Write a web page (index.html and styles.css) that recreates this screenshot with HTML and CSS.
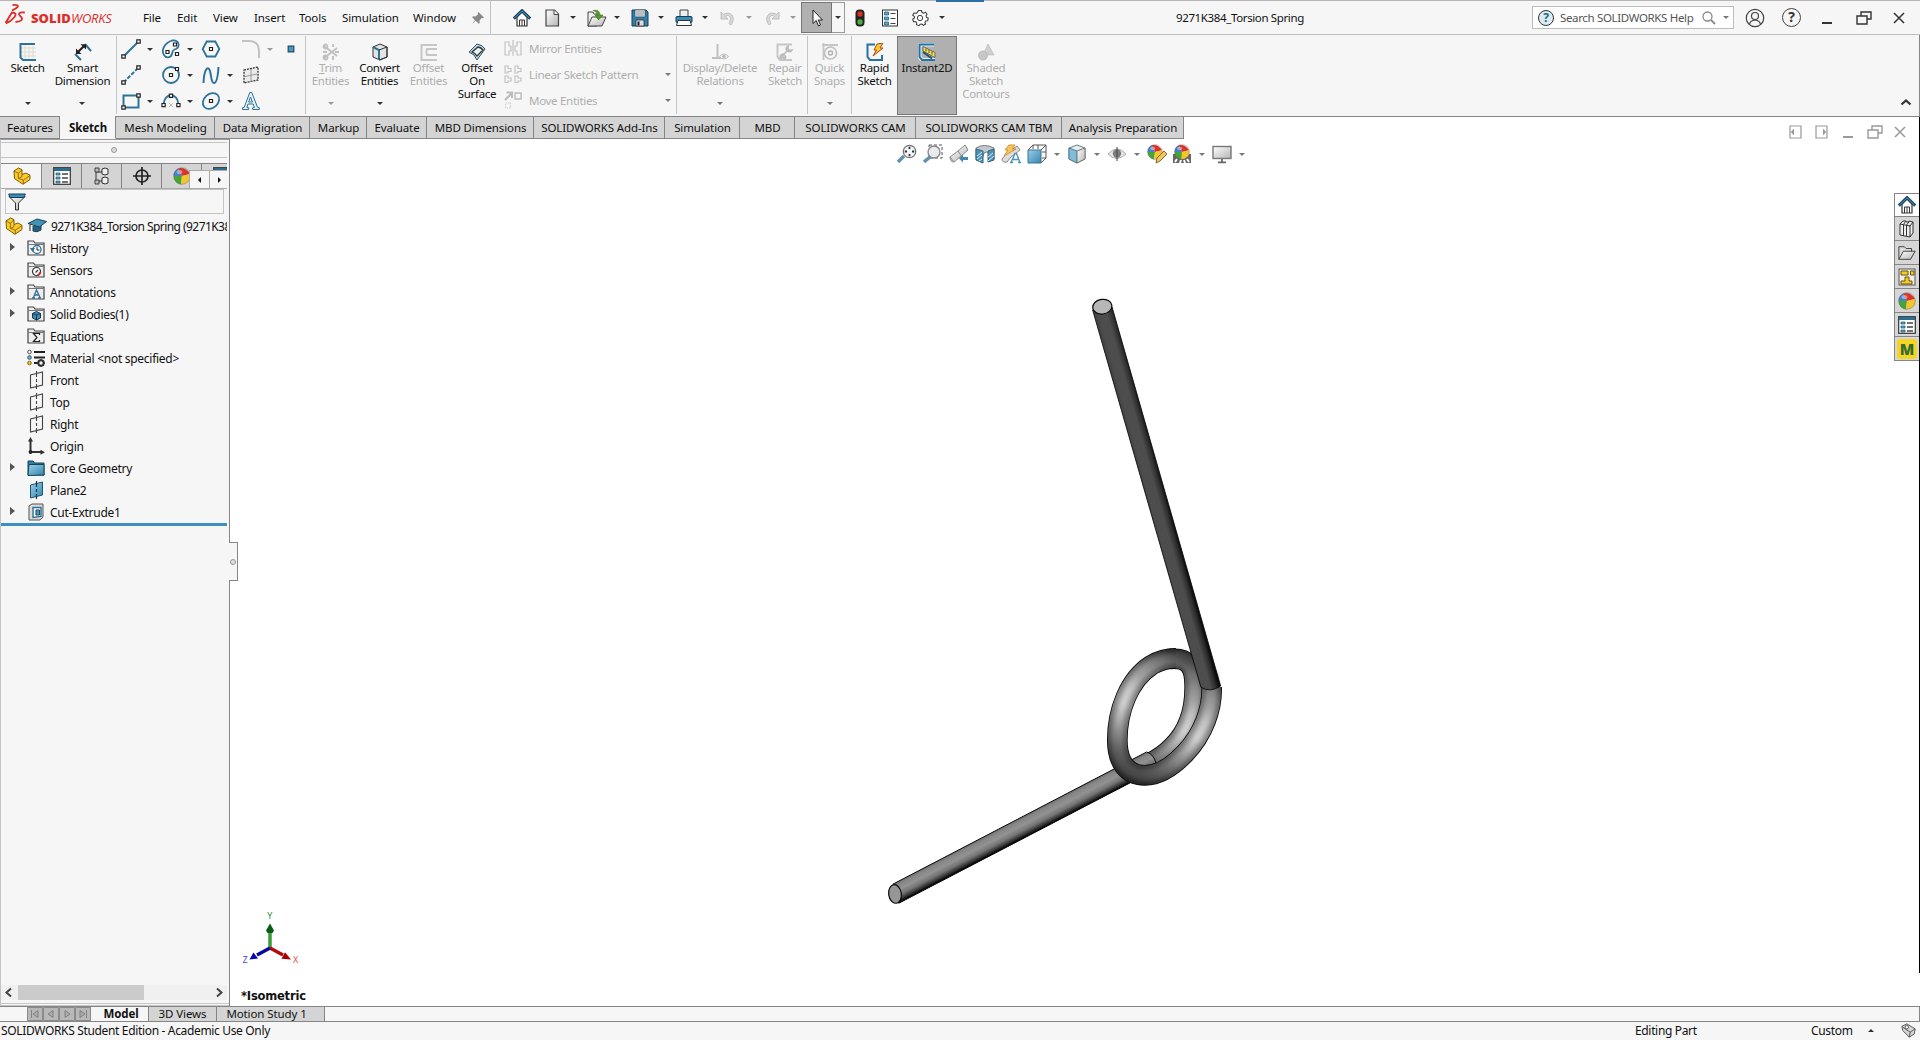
FILE: index.html
```html
<!DOCTYPE html>
<html lang="en">
<head>
<meta charset="utf-8">
<title>9271K384_Torsion Spring</title>
<link rel="stylesheet" href="styles.css">
</head>
<body>
<svg class="sprite" aria-hidden="true">
  <defs>
    <linearGradient id="blueFill" x1="0" y1="0" x2="1" y2="1"><stop offset="0" stop-color="#9bd0ea"/><stop offset="1" stop-color="#3585ad"/></linearGradient>
    <linearGradient id="greyFill" x1="0" y1="0" x2="1" y2="1"><stop offset="0" stop-color="#fff"/><stop offset="1" stop-color="#b5b5b5"/></linearGradient>
  </defs>
  <symbol id="home" viewBox="0 0 18 18"><path d="M4 8v9h10V8L9 3z" fill="#fff" stroke="#333" stroke-width="1.2"/><path d="M6.5 17v-6h5v6M9 11v6" fill="none" stroke="#333"/><path d="M.8 9.6 9 1.7l8.200 7.900" fill="none" stroke="#17425c" stroke-width="3"/><path d="M1.500 9 9 1.900 16.500 9" fill="none" stroke="#4d9fc4" stroke-width="1"/></symbol>
  <symbol id="new" viewBox="0 0 18 18"><path d="M3 1h8.500L15.500 5v12H3z" fill="url(#greyFill)" stroke="#444" stroke-width="1.200"/><path d="M11 1v4.500h4.500" fill="#fff" stroke="#444"/></symbol>
  <symbol id="open" viewBox="0 0 20 18"><path d="M1 17V3h5l1 2h3v12z" fill="#eee" stroke="#444"/><path d="M1 17 5 8h14l-4 9z" fill="url(#greyFill)" stroke="#444"/><path d="M6 1.500c4-1 7 .5 7 4.500h3l-4.500 5L8 6h2.500C10.500 4 9 2.500 6 1.500z" fill="#4e9a1f" stroke="#376d15" stroke-width=".5"/></symbol>
  <symbol id="save" viewBox="0 0 18 18"><path d="M1 1h14l2 2v14H1z" fill="#347fa7" stroke="#163e57"/><path d="M4 1h10v7H4z" fill="#f5f5f5" stroke="#163e57" stroke-width=".6"/><path d="M5 3h8M5 5h8M5 7h8" stroke="#888"/><path d="M5 11h8v6H5z" fill="#ddd" stroke="#222" stroke-width=".7"/><path d="M6.500 12.500h2v4h-2z" fill="#222"/></symbol>
  <symbol id="print" viewBox="0 0 18 18"><path d="M5 8V1h8v7" fill="#eee" stroke="#444"/><rect x="1" y="7.500" width="16" height="6" rx="1" fill="#3d8bb3" stroke="#153c54"/><path d="M3 11.500h12L16.500 16.500h-15z" fill="#fff" stroke="#333"/></symbol>
  <symbol id="undo" viewBox="0 0 18 18"><path d="M2 3v7h7L6.500 7.500c3-2.500 7 0 3.500 7l2 1.500C18 8 11 1 4.500 5.500z" fill="#d9d9d9" stroke="#b5b5b5" stroke-width=".8"/></symbol>
  <symbol id="pointer" viewBox="0 0 18 18"><path d="M5 1v13.500l3.200-3 2.300 5.500 2-1-2.300-5h4.300z" fill="#fff" stroke="#222"/></symbol>
  <symbol id="traffic" viewBox="0 0 12 18"><rect x="1.500" y=".5" width="9" height="17" rx="4" fill="#222"/><circle cx="6" cy="5" r="2.700" fill="#d93025"/><circle cx="6" cy="13" r="2.700" fill="#4caf3d"/></symbol>
  <symbol id="props" viewBox="0 0 18 18"><rect x="1.500" y="1" width="15" height="16" fill="#fff" stroke="#333"/><path d="M3.500 3h4v3h-4zM3.500 8h4v3h-4zM3.500 13h4v3h-4z" fill="#58a9cf" stroke="#1b4d69" stroke-width=".7"/><path d="M9.500 4.500h5M9.500 9.500h5M9.500 14.500h5" stroke="#444"/></symbol>
  <symbol id="list" viewBox="0 0 18 18"><rect x=".7" y=".7" width="16.600" height="16.600" fill="#fff" stroke="#333" stroke-width="1.200"/><path d="M1 1h16v3H1z" fill="#2c6c8f"/><path d="M3 6h4v2H3zM3 10h4v2H3zM3 14h4v2H3z" fill="#58a9cf" stroke="#1b4d69" stroke-width=".7"/><path d="M9 7h6M9 11h6M9 15h6" stroke="#444" stroke-width="1.300"/></symbol>
  <symbol id="gear" viewBox="0 0 18 18"><path d="m7.500 1.500 3 0 .5 2 1.500.7 2-1 1.500 2-1 1.700.5 1.400 1.700.7-.5 2.700-2 .3-.8 1.300.7 1.700-2.200 1.300-1.500-1.300-1.700.2-1.200 1.500-2.500-1 .2-2-1.200-1.200-2 .2-.8-2.500 1.700-1.200v-1.500L1.700 6.200 3 4l2 .4 1.400-1z" fill="#fff" stroke="#444" stroke-width="1.100"/><circle cx="9" cy="9" r="2.700" fill="#f6f6f6" stroke="#444"/></symbol>
  <symbol id="pin" viewBox="0 0 14 14"><path d="M7.500 1 13 6.500l-1.300.8-1-.3L8.500 9.500l.2 2.500-1 .8-3-3L1 13l3-3.800-2.800-2.900.8-1 2.500.2L7.100 3.200l-.4-1z" fill="#888"/></symbol>
  <symbol id="sketch" viewBox="0 0 18 18"><path d="M6 1v16M10 3v14M14 3v12M2 5h15M2 9h15M2 13h15" stroke="#dfdccb"/><path d="M16 1H1.500v13.500L4 17h13" fill="none" stroke="#2d7298" stroke-width="2"/></symbol>
  <symbol id="dimension" viewBox="0 0 18 18"><path d="m1 11 6 6M11 1l6 7" stroke="#2d7298" stroke-width="2"/><path d="m3.500 9.500 7-7" stroke="#222" stroke-width="2.200"/><path d="M2 5.500V11h5.500zM6.500 1.300H12v5.200z" fill="#222"/></symbol>
  <symbol id="line" viewBox="0 0 20 20"><path d="M2.500 17.500 17.500 2.500" stroke="#2d7298" stroke-width="2"/><path d="M.8 15.800h3.400v3.400H.8zM15.800.8h3.400v3.400h-3.400z" fill="#fff" stroke="#222" stroke-width="1.200"/></symbol>
  <symbol id="cline" viewBox="0 0 20 20"><path d="M2.500 17.500 17.500 2.500" stroke="#2d7298" stroke-width="2" stroke-dasharray="4 1.500"/><path d="M.8 15.800h3.400v3.400H.8zM15.800.8h3.400v3.400h-3.400z" fill="#fff" stroke="#222" stroke-width="1.200"/></symbol>
  <symbol id="rect" viewBox="0 0 20 20"><path d="M2.500 4.500h15v12h-15z" fill="none" stroke="#2d7298" stroke-width="2"/><path d="M.8 14.800h3.400v3.400H.8zM15.800 2.800h3.400v3.400h-3.400z" fill="#fff" stroke="#222" stroke-width="1.200"/></symbol>
  <symbol id="slot" viewBox="0 0 20 20"><path d="M3 16C0 12 3 4 11 1.500c7-1 8.500 6 4 8.500-4 1-3 2-4 5-1 4-6 4.500-8 1z" fill="none" stroke="#2d7298" stroke-width="1.800"/><path d="M12.500 4h3v3h-3zM5 11.500h3v3H5zM14.500 13.500h3v3h-3z" fill="#fff" stroke="#222" stroke-width="1.200"/></symbol>
  <symbol id="circle" viewBox="0 0 20 20"><circle cx="10" cy="10" r="8" fill="none" stroke="#2d7298" stroke-width="1.800"/><path d="M8.500 8.500h3v3h-3zM14.500 2.500h3v3h-3z" fill="#fff" stroke="#222" stroke-width="1.200"/></symbol>
  <symbol id="arc" viewBox="0 0 20 20"><path d="M2.500 14C3 1 17 1 17.500 14" fill="none" stroke="#2d7298" stroke-width="1.800"/><path d="m8 12 4 4m0-4-4 4" stroke="#bbb"/><path d="M1 12.500h3.200v3.200H1zM15.800 12.500H19v3.200h-3.200zM8.400 3.200h3.200v3.200H8.400z" fill="#fff" stroke="#222" stroke-width="1.200"/></symbol>
  <symbol id="polygon" viewBox="0 0 20 20"><path d="M5.700 2.500h8.600l4 7.500-4 7.500H5.700L1.700 10z" fill="none" stroke="#2d7298" stroke-width="1.800"/><path d="M8.500 8.500h3v3h-3z" fill="#fff" stroke="#222" stroke-width="1.200"/></symbol>
  <symbol id="spline" viewBox="0 0 20 20"><path d="M2.500 18C3 4 7 0 9 6c1.500 5 1 12 4 12s4-8 4.500-16" fill="none" stroke="#2d7298" stroke-width="2"/></symbol>
  <symbol id="ellipse" viewBox="0 0 20 20"><ellipse cx="10" cy="10" rx="9" ry="7" transform="rotate(-42 10 10)" fill="none" stroke="#2d7298" stroke-width="1.800"/><path d="M8.500 8.500h3v3h-3z" fill="#fff" stroke="#222" stroke-width="1.200"/></symbol>
  <symbol id="fillet" viewBox="0 0 20 20"><path d="M1 2h7q10 0 10 10v7" fill="none" stroke="#c2c2c2" stroke-width="2"/></symbol>
  <symbol id="splane" viewBox="0 0 20 20"><path d="m3 5 14-3v13L3 18z" fill="#ececec" stroke="#333" stroke-width="1.300" stroke-dasharray="2 1"/><path d="M10 4v13M4 11.500 16 9" fill="none" stroke="#999"/></symbol>
  <symbol id="textA" viewBox="0 0 20 20"><path d="M1.500 18.500v-1.800l1.700-.4L8.800 1.500h2l5.700 14.800 1.800.4v1.800h-6.600v-1.800l1.700-.4-1.200-3.300H7l-1.200 3.300 1.900.4v1.800zM7.700 11h3.700L9.500 6z" fill="#e6f1f7" stroke="#2d7298"/></symbol>
  <symbol id="point" viewBox="0 0 20 20"><path d="M7.200 7.200h5.600v5.600H7.200z" fill="#459bc6" stroke="#1d4a63" stroke-width="1.200"/></symbol>
  <symbol id="trim" viewBox="0 0 18 18"><g fill="none" stroke="#c0c0c0" stroke-width="1.800"><path d="m2 3 13 10M2 15 15 5M11 1v3M11 13v4M1 9h4M13 9h4"/><circle cx="3.500" cy="3.500" r="2"/><circle cx="3.500" cy="14.500" r="2"/></g></symbol>
  <symbol id="convert" viewBox="0 0 18 18"><path d="m2 4 7-3 7 3v10l-7 3-7-3z" fill="#e4e4e4" stroke="#333"/><path d="m2 4 6 3v10" fill="none" stroke="#2d7298" stroke-width="2"/><path d="m8 7 8-3M16 4v10l-8 3" fill="none" stroke="#333"/></symbol>
  <symbol id="offset" viewBox="0 0 18 18"><path d="M17 2H1.500v15H17M17 6H7q-1.500 3 0 6h10" fill="none" stroke="#c6c6c6" stroke-width="2"/></symbol>
  <symbol id="surface" viewBox="0 0 18 18"><path d="M1 9 9 1q6 1 8 5L9 17Q7 11 1 9z" fill="#b9d6e3" stroke="#35566a"/><path d="m4 9 6-5q3 .5 5 3l-6 6Q7 10 4 9z" fill="#e8f0f4" stroke="#333" stroke-width="1.300"/></symbol>
  <symbol id="mirror" viewBox="0 0 18 18"><path d="M1 3h4v4h2v5H5v4H1zM17 3h-4v4h-2v5h2v4h4zM9 1v16" fill="none" stroke="#c3c3c3" stroke-width="1.200"/></symbol>
  <symbol id="pattern" viewBox="0 0 18 18"><path d="M1 1h3v2.500h3v3H4V8H1zM11 1h3v2.500h3v3h-3V8h-3zM1 11h3v2h3v3H4v1.500H1zM11 11h3v2h3v3h-3v1.500h-3z" fill="none" stroke="#c3c3c3" stroke-width="1.200"/></symbol>
  <symbol id="move" viewBox="0 0 18 18"><path d="m1 9 6-6M2.500 1.500H8v5.500" fill="none" stroke="#bbb" stroke-width="2"/><path d="M11 2h6v6h-6z" fill="none" stroke="#bbb" stroke-width="1.400"/><path d="M1.500 12h5v5h-5z" fill="none" stroke="#ccc" stroke-dasharray="1.500 1"/></symbol>
  <symbol id="relations" viewBox="0 0 18 18"><path d="M6.500 1v14M1 15h9" stroke="#c0c0c0" stroke-width="2"/><path d="M8.500 13.500q4.500-5 9 0-4.500 5-9 0z" fill="#f5f5f5" stroke="#bbb"/><circle cx="13" cy="13.500" r="1.800" fill="#bbb"/></symbol>
  <symbol id="repair" viewBox="0 0 18 18"><path d="M16 1.500H1.500V14L4 17h12" fill="none" stroke="#c6c6c6" stroke-width="2"/><path d="m6 13 6-6M12 3q-3 2-1 5 3 2 5-1l-2.500.5-1.500-2zM7 11q-4 1-2.500 5l2-2 2 2q3-2-1.500-5z" fill="#ccc" stroke="#bbb" stroke-width="1.500"/></symbol>
  <symbol id="snaps" viewBox="0 0 18 18"><path d="M1 2h16M2.500 0v17" stroke="#c6c6c6" stroke-width="1.800"/><circle cx="9.500" cy="10" r="6" fill="none" stroke="#c0c0c0" stroke-width="1.700"/><circle cx="9.500" cy="10" r="2" fill="none" stroke="#b0b0b0" stroke-width="1.400"/></symbol>
  <symbol id="rapid" viewBox="0 0 18 18"><path d="M9 1.500H1.500V14L4 17h12v-5" fill="none" stroke="#2772a0" stroke-width="2"/><path d="m11 1 6-1-3 5h3L7 13l3.500-6H8z" fill="#f8c83a" stroke="#b14a12"/></symbol>
  <symbol id="instant" viewBox="0 0 18 18"><path d="M16 1.500H1.500V14L4 17h13" fill="none" stroke="#dff2fb" stroke-width="4"/><path d="M16 1.500H1.500V14L4 17h13" fill="none" stroke="#2772a0" stroke-width="2"/><path d="m5 3.500 12 6v5L5 8z" fill="#f6df50" stroke="#555" stroke-width=".8"/><path d="m5 9 9 6.500" stroke="#1f5570" stroke-width="2"/><path d="M8 5.500v3m3-1.500v3m3-1.500v3" stroke="#333" stroke-width=".8"/></symbol>
  <symbol id="contours" viewBox="0 0 18 18"><path d="m11 1 6 11H6z" fill="#cfcfcf" stroke="#bbb" stroke-width=".7"/><circle cx="6" cy="12.500" r="4.600" fill="#c6c6c6" stroke="#b5b5b5" stroke-width=".7"/></symbol>
  <symbol id="part" viewBox="0 0 18 18"><path d="M1 4 5.500 1 9 2.700V7.500L13 6l4 2.300v4.200L10 17.300 1.500 11.500z" fill="#fcca2c" stroke="#7b5b05"/><path d="m1.300 4.200 4 2v5l5 2 6.400-4.500M5.300 6.200 9 3M9 7.500v2l-3.500 2M10.300 13v4" fill="none" stroke="#7b5b05" stroke-width=".8"/></symbol>
  <symbol id="config" viewBox="0 0 18 18"><path d="M3 1v16M3 5h7M3 14h7" stroke="#333" fill="none"/><path d="M2 1h4v4H2zM2 13h4v4H2z" fill="#bbb" stroke="#444"/><path d="m9 2 3-1 3 1v5l-3 1-3-1zM9 11l3-1 3 1v5l-3 1-3-1z" fill="#eee" stroke="#333"/></symbol>
  <symbol id="target" viewBox="0 0 18 18"><circle cx="9" cy="9" r="6" fill="none" stroke="#222" stroke-width="1.700"/><path d="M9 0v18M0 9h18" stroke="#222" stroke-width="1.700"/></symbol>
  <symbol id="ball" viewBox="0 0 18 18"><path d="M9 9 5 1.500A8.500 8.500 0 0 0 .6 9z" fill="#4a7fc9"/><path d="M9 9 5 1.500Q12-.5 17 7z" fill="#d8342b"/><path d="M9 9 .6 9Q1 16 8 17.500z" fill="#46a536"/><path d="M9 9 17 7q2 9-9 10.500z" fill="#f3c52b"/><circle cx="9" cy="9" r="8.300" fill="none" stroke="#555" stroke-opacity=".55" stroke-width=".7"/><ellipse cx="6.500" cy="5" rx="3" ry="2" fill="#fff" opacity=".4"/></symbol>
  <symbol id="funnel" viewBox="0 0 18 18"><path d="M1 3.500 7.500 10v7h3v-7L17 3.500z" fill="url(#greyFill)" stroke="#333"/><path d="M.7 1h16.600l-1.300 3.500H2z" fill="#3b8cb4" stroke="#174159"/></symbol>
  <symbol id="cap" viewBox="0 0 20 18"><path d="M6 9v5q4 2 8-1V8" fill="#24617f" stroke="#1c4257"/><path d="M1 6.500 10 2l9.500 2.500-7 5.500z" fill="#4293b9" stroke="#1c4257"/><path d="M3 7.500V14" stroke="#222"/></symbol>
  <symbol id="folder" viewBox="0 0 18 18"><path d="M1 16V2h5.500L8 4h9v12z" fill="#eee" stroke="#444" stroke-width="1.200"/><path d="M1 5.500h16" stroke="#777"/></symbol>
  <symbol id="bfolder" viewBox="0 0 18 18"><path d="M1 16V2h5l1.500 2H17v12z" fill="#2f7da3" stroke="#17455d"/><path d="M1 16.500 2 5.500h15V16z" fill="url(#blueFill)" stroke="#17455d"/></symbol>
  <symbol id="material" viewBox="0 0 18 18"><path d="M7 3h11M7 8.500h11M7 14h5" stroke="#222" stroke-width="2"/><circle cx="2.500" cy="3" r="1.800" fill="#eee" stroke="#555"/><circle cx="2.500" cy="8.500" r="1.800" fill="#6cb6dc" stroke="#28546c"/><circle cx="2.500" cy="14" r="1.800" fill="#f3c52b" stroke="#86680d"/><circle cx="14" cy="14" r="2.700" fill="none" stroke="#333" stroke-width="2"/><path d="M14 10v1.500m0 5V18M10 14h1.500m5 0H18M11.200 11.200l1 1m3.600 3.600 1 1m0-5.600-1 1m-3.600 3.600-1 1" stroke="#333" stroke-width="1.300"/></symbol>
  <symbol id="plane" viewBox="0 0 18 18"><path d="m3.500 4 12-3v13l-12 3zM9.500 0v6m0 2v3m0 2v5" fill="none" stroke="#444" stroke-width="1.100"/></symbol>
  <symbol id="bplane" viewBox="0 0 18 18"><path d="m3.500 4 12-3v13l-12 3z" fill="url(#blueFill)" stroke="#1d5774"/><path d="M9.500 0v6m0 2v3m0 2v5" stroke="#17384a" stroke-width="1.200"/></symbol>
  <symbol id="origin" viewBox="0 0 18 18"><path d="M3.500 3v12H16" fill="none" stroke="#333" stroke-width="2"/><path d="m3.500 0 2.500 4.500H1zM18 15.200l-4.500 2.500v-5z" fill="#333"/><circle cx="3.500" cy="15" r="1.900" fill="#222"/></symbol>
  <symbol id="cut" viewBox="0 0 18 18"><path d="m2 3 3-2h11v13l-3 3H2z" fill="#dcdcdc" stroke="#555"/><path d="M6 4.500h8v9l-8 1z" fill="#f5f5f5" stroke="#2d7298" stroke-width="1.400"/><path d="M9 7h3.500v5H9z" fill="#4a9cc1" stroke="#1d4a63"/></symbol>
  <symbol id="magfit" viewBox="0 0 20 20"><path d="m1 18 6-6" stroke="#5e92ad" stroke-width="3.400"/><circle cx="12.500" cy="7.500" r="6.200" fill="#f3f6f8" stroke="#777" stroke-width="1.300"/><path d="M12.500 2.800v2.200m0 5v2.200m-4.700-4.700H10m5 0h2.200" stroke="#333" stroke-width="1.800"/></symbol>
  <symbol id="magarea" viewBox="0 0 20 20"><path d="M6 1h13v13H6z" fill="none" stroke="#555" stroke-dasharray="3 2"/><path d="m1 18 6-5" stroke="#5e92ad" stroke-width="3.400"/><circle cx="11" cy="8" r="6" fill="#e8eaeb" stroke="#888" stroke-width="1.300"/></symbol>
  <symbol id="prevview" viewBox="0 0 20 20"><path d="m1 13 8-6 7-6 3 5-7 6-7 6q-4 0-4-5z" fill="url(#greyFill)" stroke="#888"/><path d="m1 13 4 5M9 7l3 4.500" stroke="#888" fill="none"/><path d="m10 14.500 4-4V13h5v3h-5v2.500z" fill="#3f89ae"/></symbol>
  <symbol id="section" viewBox="0 0 20 20"><path d="M1 4q8-5 18 0v11l-4 2V9q-4-2-6 0l-3 9-5-3z" fill="#c3cacd" stroke="#777"/><path d="m1 5 7 2v12l-7-3zM13 7l6-2v11l-6 2z" fill="#4c94b7" stroke="#35657c"/><path d="m2 12 5-4M2 15l5-4m0 4-3 2m9-4 5-4m-5 8 6-5" stroke="#d9edf6"/></symbol>
  <symbol id="dynview" viewBox="0 0 20 20"><path d="m1 15 5-6L16 2l3 4-9 7-4 5q-5 1-5-3z" fill="#ddd" stroke="#888"/><path d="m8 1 6 0-3 4h4L3 12l4-6H4z" fill="#f9c65c" stroke="#d19439"/><path d="m10 18.500 4-9h1.500l3.500 9M12 15.500h5M9 18.500h3m5 0h3" fill="none" stroke="#4c93b6" stroke-width="1.400"/></symbol>
  <symbol id="orient" viewBox="0 0 20 20"><path d="M6 5V1h13v13h-4M1 6l5-5m8 5 5-5M11 1v4m4 3h4M14 19l5-5" fill="none" stroke="#555"/><path d="M1 6h13v13H1z" fill="url(#blueFill)" stroke="#3b7390"/></symbol>
  <symbol id="display" viewBox="0 0 20 20"><path d="m2 4 8-3 8 3v11l-8 4-8-4z" fill="#e4edf1" stroke="#777"/><path d="m2 4 8 3v12l-8-4z" fill="#7fbdd9" stroke="#4d7f96"/><path d="m10 7 8-3v11l-8 4z" fill="url(#greyFill)" stroke="#777"/></symbol>
  <symbol id="eye" viewBox="0 0 20 20"><path d="M1 10q9-10 18 0-9 9-18 0z" fill="#e6e6e6" stroke="#aaa"/><circle cx="10" cy="9.500" r="4.200" fill="#7e7e7e"/><path d="M10 3v14" stroke="#444"/></symbol>
  <symbol id="pencil" viewBox="0 0 20 20"><path d="m9 19 1-5 7-7 3 3-7 7z" fill="#f2c65c" stroke="#806740"/></symbol>
  <symbol id="monitor" viewBox="0 0 20 20"><rect x="1" y="2.500" width="18" height="12" fill="url(#greyFill)" stroke="#777" stroke-width="1.400"/><path d="M10 15v3M6 18.300h8" stroke="#666" stroke-width="1.700"/></symbol>
  <symbol id="user" viewBox="0 0 20 20"><circle cx="10" cy="10" r="8.700" fill="none" stroke="#444" stroke-width="1.200"/><circle cx="10" cy="8" r="3.500" fill="none" stroke="#444" stroke-width="1.200"/><path d="M4.500 16.500q.5-4 5.500-4.500 5 .5 5.500 4.500" fill="none" stroke="#444" stroke-width="1.200"/></symbol>
  <symbol id="books" viewBox="0 0 18 18"><path d="m2 4 3-3h3v1h3V1l4 1v11l-3 4-10-2z" fill="#eee" stroke="#333"/><path d="M5.500 5v11M8.500 5v11M12 5v12M2 4l10 2 3-4M5.500 4.500l2-3M8.500 5l2.500-3" fill="none" stroke="#333"/></symbol>
  <symbol id="gfolder" viewBox="0 0 20 18"><path d="M1 16V2h6l2 2h6v4" fill="#ddd" stroke="#333"/><path d="m1 16 5-9h13l-5 9z" fill="url(#greyFill)" stroke="#333"/></symbol>
  <symbol id="palette" viewBox="0 0 18 18"><rect x="1" y="1" width="16" height="16" fill="#eee" stroke="#555"/><path d="M3 3h7v4H3zM12.500 3H16v4h-3.500zM7 9h4v4h3v3H3v-3h4z" fill="#f5cb2c" stroke="#695509"/></symbol>
  <symbol id="tag" viewBox="0 0 18 18"><path d="m1 4 6-3 10 6-1 6-6 4L2 9z" fill="#d4d4d4" stroke="#444"/><path d="m2 5 9 6 6-4M11 11l-1 6" fill="none" stroke="#444"/><circle cx="7" cy="5" r="2" fill="#fff" stroke="#444"/></symbol>
  <symbol id="restore" viewBox="0 0 16 14"><path d="M5 4.500V1h10v7h-4M1 5h10v8H1z" fill="none" stroke="currentColor" stroke-width="1.400"/></symbol>
  <symbol id="close" viewBox="0 0 12 12"><path d="m1 1 10 10M11 1 1 11" stroke="currentColor" stroke-width="1.500"/></symbol>
</svg>

<div class="app">
  <header class="titlebar">
    <div class="logo">
      <svg width="21" height="22" viewBox="0 0 21 22"><path d="M7.500 1.200q5-.8 5.500.8-.5 2-6 4.500M.5 19 7 8.500q5.500.2 2.500 4.500Q6 17.500.8 19.500M19.800 8.500q-6-.8-5.800 1.700.5 1.500 2.700 3.300 1.500 4-6.200 4.500" fill="none" stroke="#da2f2b" stroke-width="1.800"/></svg>
      <span class="brand"><b>SOLID</b><em>WORKS</em></span>
    </div>
    <nav class="menu"><span>File</span><span>Edit</span><span>View</span><span>Insert</span><span>Tools</span><span>Simulation</span><span>Window</span></nav>
    <div class="pin"><svg width="14" height="14"><use href="#pin"/></svg></div>
    <div class="quick">
      <svg class="q-home" width="18" height="18"><use href="#home"/></svg>
      <svg class="q" width="18" height="18"><use href="#new"/></svg><i class="dd"></i>
      <svg class="q-open" width="20" height="18"><use href="#open"/></svg><i class="dd"></i>
      <svg class="q" width="18" height="18"><use href="#save"/></svg><i class="dd"></i>
      <svg class="q" width="18" height="18"><use href="#print"/></svg><i class="dd"></i>
      <svg class="q" width="18" height="18"><use href="#undo"/></svg><i class="dd dim"></i>
      <svg class="q flip" width="18" height="18"><use href="#undo"/></svg><i class="dd dim"></i>
    </div>
    <div class="select"><span class="select-main"><svg width="18" height="18"><use href="#pointer"/></svg></span><span class="select-dd"><i class="dd"></i></span></div>
    <div class="quick-end"><svg width="12" height="18"><use href="#traffic"/></svg><svg width="18" height="18"><use href="#props"/></svg><svg width="18" height="18"><use href="#gear"/></svg><i class="dd"></i></div>
    <div class="doc-title">9271K384_Torsion Spring</div>
    <div class="search"><span class="q-badge">?</span><span class="search-text">Search SOLIDWORKS Help</span><svg width="14" height="14" viewBox="0 0 14 14"><circle cx="5.500" cy="5.500" r="4.500" fill="none" stroke="#888" stroke-width="1.300"/><path d="m9 9 4 4" stroke="#888" stroke-width="1.800"/></svg><i class="dd grey"></i></div>
    <div class="window-buttons">
      <svg width="20" height="20"><use href="#user"/></svg>
      <span class="help">?</span>
      <span class="min"></span>
      <svg width="16" height="14"><use href="#restore"/></svg>
      <svg width="12" height="12"><use href="#close"/></svg>
    </div>
    <div class="accent"></div>
  </header>

  <section class="ribbon">
    <div class="btn w-sketch"><svg><use href="#sketch"/></svg><span>Sketch</span><i class="dd"></i></div>
    <div class="btn w-smart"><svg><use href="#dimension"/></svg><span>Smart<br>Dimension</span><i class="dd"></i></div>
    <div class="sep"></div>
    <div class="tools">
      <div><svg><use href="#line"/></svg><i class="dd"></i></div><div><svg><use href="#slot"/></svg><i class="dd"></i></div><div><svg><use href="#polygon"/></svg></div><div><svg><use href="#fillet"/></svg><i class="dd dim"></i></div><div><svg><use href="#point"/></svg></div>
      <div><svg><use href="#cline"/></svg></div><div><svg><use href="#circle"/></svg><i class="dd"></i></div><div><svg><use href="#spline"/></svg><i class="dd"></i></div><div><svg><use href="#splane"/></svg></div><div></div>
      <div><svg><use href="#rect"/></svg><i class="dd"></i></div><div><svg><use href="#arc"/></svg><i class="dd"></i></div><div><svg><use href="#ellipse"/></svg><i class="dd"></i></div><div><svg><use href="#textA"/></svg></div><div></div>
    </div>
    <div class="sep"></div>
    <div class="btn off w-49"><svg><use href="#trim"/></svg><span><u>T</u>rim<br>Entities</span><i class="dd dim"></i></div>
    <div class="btn w-49"><svg><use href="#convert"/></svg><span>Convert<br>Entities</span><i class="dd"></i></div>
    <div class="btn off w-49"><svg><use href="#offset"/></svg><span>Offset<br>Entities</span></div>
    <div class="btn w-48"><svg><use href="#surface"/></svg><span>Offset<br>On<br>Surface</span></div>
    <div class="rows">
      <div><svg><use href="#mirror"/></svg><span>Mirror Entities</span></div>
      <div><svg><use href="#pattern"/></svg><span>Linear Sketch Pattern</span><i class="dd grey"></i></div>
      <div><svg><use href="#move"/></svg><span>Move Entities</span><i class="dd grey"></i></div>
    </div>
    <div class="sep"></div>
    <div class="btn off w-86"><svg><use href="#relations"/></svg><span>Display/Delete<br>Relations</span><i class="dd grey"></i></div>
    <div class="btn off w-44"><svg><use href="#repair"/></svg><span>Repair<br>Sketch</span></div>
    <div class="sep"></div>
    <div class="btn off w-43"><svg><use href="#snaps"/></svg><span>Quick<br>Snaps</span><i class="dd grey"></i></div>
    <div class="sep"></div>
    <div class="btn w-45"><svg><use href="#rapid"/></svg><span>Rapid<br>Sketch</span></div>
    <div class="btn pressed"><svg><use href="#instant"/></svg><span>Instant2D</span></div>
    <div class="btn off w-58"><svg><use href="#contours"/></svg><span>Shaded<br>Sketch<br>Contours</span></div>
    <svg class="collapse" width="12" height="8" viewBox="0 0 12 8"><path d="m1.500 6.500 4.500-4 4.500 4" fill="none" stroke="#333" stroke-width="2.200"/></svg>
  </section>

  <div class="tabrow">
    <nav class="tabs">
      <span class="t60">Features</span><span class="t56 active">Sketch</span><span class="t99">Mesh Modeling</span><span class="t95">Data Migration</span><span class="t57">Markup</span><span class="t60">Evaluate</span><span class="t107">MBD Dimensions</span><span class="t131">SOLIDWORKS Add-Ins</span><span class="t74">Simulation</span><span class="t55">MBD</span><span class="t121">SOLIDWORKS CAM</span><span class="t146">SOLIDWORKS CAM TBM</span><span class="t122">Analysis Preparation</span>
    </nav>
    <div class="doc-buttons">
      <svg width="13" height="14" viewBox="0 0 13 14"><path d="M1 1h11v12H1z" fill="none" stroke="currentColor" stroke-width="1.200"/><path d="M5 3.500v7L1.800 7z" fill="currentColor"/></svg>
      <svg width="13" height="14" viewBox="0 0 13 14"><path d="M1 1h11v12H1z" fill="none" stroke="currentColor" stroke-width="1.200"/><path d="M8 3.500v7L11.200 7z" fill="currentColor"/></svg>
      <span class="min"></span>
      <svg width="16" height="14"><use href="#restore"/></svg>
      <svg width="12" height="12"><use href="#close"/></svg>
    </div>
  </div>

  <main class="body">
    <aside class="panel">
      <div class="grip"><i></i></div>
      <div class="ptabs">
        <span class="on"><svg><use href="#part"/></svg></span><span><svg><use href="#list"/></svg></span><span><svg><use href="#config"/></svg></span><span><svg><use href="#target"/></svg></span><span><svg><use href="#ball"/></svg></span><span><svg><use href="#list"/></svg></span>
        <div class="pscroll"><b class="left"></b><b class="right"></b></div>
      </div>
      <div class="filter"><svg width="18" height="18"><use href="#funnel"/></svg></div>
      <ul class="tree">
        <li class="root"><svg><use href="#part"/></svg><svg class="cap"><use href="#cap"/></svg><span>9271K384_Torsion Spring (9271K38</span></li>
        <li><i class="exp"></i><svg viewBox="0 0 18 18"><use href="#folder"/><circle cx="10" cy="10.500" r="4" fill="#fff" stroke="#2d7298" stroke-width="1.300"/><path d="M10 8v3h2.500" stroke="#222" fill="none"/><path d="m3 9 5 0-2.500 4z" fill="#2d7298"/></svg><span>History</span></li>
        <li><i></i><svg viewBox="0 0 18 18"><use href="#folder"/><circle cx="9.500" cy="10.500" r="4" fill="#fff" stroke="#333" stroke-width="1.200"/><path d="m8.500 11.500 2.500-2.500" stroke="#333" stroke-width="1.200"/><path d="M10.500 14.200Q13 13.500 13.300 11" fill="none" stroke="#d22" stroke-width="1.800"/></svg><span>Sensors</span></li>
        <li><i class="exp"></i><svg viewBox="0 0 18 18"><use href="#folder"/><path d="M5 15h3m3 0h3M6.500 14.500 9.500 7l3.500 7.500M8 12h4" fill="none" stroke="#2d7298" stroke-width="1.300"/></svg><span>Annotations</span></li>
        <li><i class="exp"></i><svg viewBox="0 0 18 18"><use href="#folder"/><path d="m5.500 8.500 4-2 4 2v4.500l-4 2-4-2z" fill="#3b8cb4" stroke="#17384a"/><path d="m5.500 8.500 4 1.500 4-1.500M9.500 10v5" stroke="#17384a" fill="none"/></svg><span>Solid Bodies(1)</span></li>
        <li><i></i><svg viewBox="0 0 18 18"><use href="#folder"/><path d="M12.500 8V6.500h-6l3.500 4-3.500 4h6V13" fill="none" stroke="#222" stroke-width="1.200"/></svg><span>Equations</span></li>
        <li><i></i><svg><use href="#material"/></svg><span>Material &lt;not specified&gt;</span></li>
        <li><i></i><svg><use href="#plane"/></svg><span>Front</span></li>
        <li><i></i><svg><use href="#plane"/></svg><span>Top</span></li>
        <li><i></i><svg><use href="#plane"/></svg><span>Right</span></li>
        <li><i></i><svg><use href="#origin"/></svg><span>Origin</span></li>
        <li><i class="exp"></i><svg><use href="#bfolder"/></svg><span>Core Geometry</span></li>
        <li><i></i><svg><use href="#bplane"/></svg><span>Plane2</span></li>
        <li><i class="exp"></i><svg><use href="#cut"/></svg><span>Cut-Extrude1</span></li>
      </ul>
      <div class="rollback"></div>
      <div class="hscroll"><svg width="17" height="15" viewBox="0 0 17 15"><path d="M10 3.500 5.500 7.500l4.500 4" fill="none" stroke="#444" stroke-width="2"/></svg><div class="thumb"></div><svg width="17" height="15" viewBox="0 0 17 15"><path d="m7 3.500 4.500 4-4.500 4" fill="none" stroke="#444" stroke-width="2"/></svg></div>
      <div class="pfoot"></div>
      <div class="handle"><i></i></div>
    </aside>

    <section class="viewport">
      <svg class="model" viewBox="230 139 1689 867">
        <defs>
          <linearGradient id="coil" gradientUnits="userSpaceOnUse" x1="765" y1="420" x2="930" y2="60"><stop offset="0" stop-color="#3f3f3f"/><stop offset=".15" stop-color="#606060"/><stop offset=".3" stop-color="#929292"/><stop offset=".48" stop-color="#b8b8b8"/><stop offset=".62" stop-color="#b8b8b8"/><stop offset=".8" stop-color="#939393"/><stop offset=".92" stop-color="#6c6c6c"/><stop offset="1" stop-color="#444"/></linearGradient>
          <linearGradient id="coilEdge" gradientUnits="userSpaceOnUse" x1="765" y1="420" x2="930" y2="60"><stop offset="0" stop-color="#222"/><stop offset=".25" stop-color="#565656"/><stop offset=".5" stop-color="#838383"/><stop offset=".8" stop-color="#646464"/><stop offset="1" stop-color="#282828"/></linearGradient>
          <linearGradient id="shine" gradientUnits="userSpaceOnUse" x1="765" y1="420" x2="930" y2="60"><stop offset=".3" stop-color="#eee" stop-opacity="0"/><stop offset=".5" stop-color="#ececec" stop-opacity=".9"/><stop offset=".72" stop-color="#eee" stop-opacity="0"/></linearGradient>
          <linearGradient id="rod" gradientUnits="userSpaceOnUse" x1="400" y1="544" x2="427" y2="596"><stop offset="0" stop-color="#6c6c6c"/><stop offset=".15" stop-color="#868686"/><stop offset=".4" stop-color="#929292"/><stop offset=".65" stop-color="#747474"/><stop offset=".85" stop-color="#363636"/><stop offset="1" stop-color="#000"/></linearGradient>
          <linearGradient id="arm" gradientUnits="userSpaceOnUse" x1="800" y1="-425" x2="858" y2="-441"><stop offset="0" stop-color="#444"/><stop offset=".15" stop-color="#4d4d4d"/><stop offset=".55" stop-color="#4d4d4d"/><stop offset=".8" stop-color="#303030"/><stop offset="1" stop-color="#0a0a0a"/></linearGradient>
          <filter id="soft" x="-20%" y="-20%" width="140%" height="140%"><feGaussianBlur stdDeviation="6"/></filter>
          <path id="rear" d="M870 57C925 52 944 78 944 135C946 215 925 275 876 322C856 342 838 355 815 366"/>
          <path id="front" d="M995 142C997 205 972 280 915 340C875 382 835 406 795 406C740 406 712 365 712 300C712 215 745 120 815 75C840 60 865 55 888 55"/>
          <path id="frontShade" d="M990 100L995 142C997 205 972 280 915 340C875 382 835 406 795 406C740 406 712 365 712 300C712 215 745 120 815 75C840 60 865 55 888 55C922 56 938 78 943 115"/>
        </defs>
        <g transform="translate(880 640) scale(.3333)" fill="none">
          <use href="#rear" stroke="#050505" stroke-width="62"/>
          <use href="#rear" stroke="url(#coilEdge)" stroke-width="57"/>
          <use href="#rear" stroke="url(#coil)" stroke-width="36" filter="url(#soft)"/>
          <use href="#rear" stroke="url(#shine)" stroke-width="9" filter="url(#soft)"/>
          <path d="M38 733 800 336Q824 345 828 371L790 408 56 790z" fill="url(#rod)"/>
          <path d="M38 733 800 336M56 790 790 408" stroke="#080808" stroke-width="3"/>
          <path d="M800 336Q824 345 828 371" stroke="#050505" stroke-width="3"/>
          <ellipse cx="45" cy="762" rx="19" ry="28" transform="rotate(-8 45 762)" fill="#969696" stroke="#050505" stroke-width="3.500"/>
          <use href="#front" stroke="#050505" stroke-width="62"/>
          <use href="#front" stroke="url(#coilEdge)" stroke-width="57"/>
          <use href="#frontShade" stroke="url(#coil)" stroke-width="36" filter="url(#soft)"/>
          <use href="#frontShade" stroke="url(#shine)" stroke-width="9" filter="url(#soft)"/>
          <path d="M638-990 963 142Q990 159 1022 138L696-1000z" fill="url(#arm)" stroke="#050505" stroke-width="2.500"/>
          <ellipse cx="667" cy="-1000" rx="29" ry="22" transform="rotate(-8 667 -1000)" fill="#b7b7b7" stroke="#050505" stroke-width="3.500"/>
        </g>
        <g class="triad">
          <path d="M270 948V930" stroke="#3b9a3b" stroke-width="3.500"/><path d="M270 923.500 274 930.500 272.500 933h-5L266 930.500z" fill="#0a5c12"/>
          <path d="m270 948 13 7" stroke="#b00c0c" stroke-width="3.500"/><path d="m291 959.500-9.500-.8 3.500-6.500z" fill="#a80000"/>
          <path d="m270 948-13 7" stroke="#0a0a9c" stroke-width="3.500"/><path d="m249.500 959.500 4-7 4.500 6z" fill="#0505b4"/>
          <text x="267.300" y="918.500" fill="#2e8a3a">Y</text><text x="293" y="963" fill="#ee4a4a">X</text><text x="242.500" y="963" fill="#4a4ad0">Z</text>
        </g>
      </svg>
      <div class="hud">
        <svg><use href="#magfit"/></svg><svg><use href="#magarea"/></svg><svg><use href="#prevview"/></svg><svg><use href="#section"/></svg><svg><use href="#dynview"/></svg><svg><use href="#orient"/></svg><i class="dd grey"></i>
        <svg><use href="#display"/></svg><i class="dd grey"></i>
        <svg><use href="#eye"/></svg><i class="dd grey"></i>
        <svg viewBox="0 0 20 20"><use href="#ball" width="16" height="16"/><use href="#pencil"/></svg>
        <svg class="scene" viewBox="0 0 20 20"><path d="M1 10h18v9H1z" fill="#666"/><path d="m3 18 2-3m3 4 1-3m4 3-1-3m5 2-2-3" stroke="#fff" stroke-width="2"/><use href="#ball" x="2" y="0" width="16" height="16"/></svg><i class="dd grey"></i>
        <svg><use href="#monitor"/></svg><i class="dd grey"></i>
      </div>
      <nav class="taskpane">
        <span class="on"><svg><use href="#home"/></svg></span><span><svg><use href="#books"/></svg></span><span><svg><use href="#gfolder"/></svg></span><span><svg><use href="#palette"/></svg></span><span><svg><use href="#ball"/></svg></span><span><svg><use href="#list"/></svg></span><span><b>M</b></span>
      </nav>
      <div class="orientation">*Isometric</div>
    </section>
  </main>

  <div class="motion">
    <div class="nav"><svg viewBox="0 0 64 14" width="64" height="14"><path d="M.5.500h15v13H.5zM16.500.500h15v13h-15zM32.500.500h15v13h-15zM48.500.500h15v13h-15z" fill="none" stroke="#8b8b8b"/><path d="M4.500 3v8M11 3.500v7L6 7zM26 3.500v7L21 7zM38 3.500v7l5-3.500zM53 3.500v7l5-3.500zM59.500 3v8" fill="#aaa" stroke="#828282"/></svg></div>
    <span class="m-model">Model</span><span class="m-views">3D Views</span><span class="m-study">Motion Study 1</span>
  </div>
  <footer class="status"><span>SOLIDWORKS Student Edition - Academic Use Only</span><span class="editing">Editing Part</span><span class="custom">Custom</span><i class="up"></i><svg width="17" height="15"><use href="#tag"/></svg></footer>
</div>
</body>
</html>
```
FILE: styles.css
```css
* { box-sizing: border-box; }
body { margin: 0; overflow: hidden; font: 11.5px/13px "Noto Sans", "Open Sans", sans-serif; color: #111; letter-spacing: -.1px; }
svg { display: block; flex: none; }
.sprite { position: absolute; width: 0; height: 0; }
.app { width: 1920px; height: 1040px; display: flex; flex-direction: column; background: #fff; }
i { font-style: normal; }
.dd { flex: none; width: 0; height: 0; border: 3px solid transparent; border-top: 3px solid #333; border-bottom: 0; }
.dd.grey { border-top-color: #777; }
.dd.dim { border-top-color: #999; }

/* title bar */
.titlebar { position: relative; height: 35px; flex: none; display: flex; align-items: center; background: #f6f6f6; border-top: 1px solid #b9b5b7; border-bottom: 1px solid #bdbdbd; }
.accent { position: absolute; top: -1px; left: 936px; width: 48px; height: 2px; background: #2a6fa8; }
.logo { display: flex; align-items: center; width: 143px; padding-left: 5px; gap: 5px; height: 34px; padding-bottom: 5px; }
.brand { font: 13px/14px "Open Sans", sans-serif; color: #da2f2b; padding-top: 6px; letter-spacing: .1px; white-space: nowrap; }
.brand b { font-weight: 800; }
.brand em { letter-spacing: -.2px; }
.menu { display: flex; width: 327px; }
.menu span { width: 34px; }
.menu span:nth-child(2) { width: 36px; }
.menu span:nth-child(3) { width: 41px; }
.menu span:nth-child(4) { width: 45px; }
.menu span:nth-child(5) { width: 43px; }
.menu span:nth-child(6) { width: 71px; }
.pin { width: 21px; height: 34px; border-right: 1px solid #c2c2c2; display: flex; align-items: center; padding-left: 1px; }
.quick { display: flex; align-items: center; width: 310px; padding-left: 22px; }
.q-home { margin-right: 12px; }
.q { margin-right: 9px; }
.q-open { margin-right: 7px; }
.quick .dd { margin-right: 11px; }
.flip { transform: scaleX(-1); }
.select { display: flex; width: 44px; height: 31px; }
.select-main { width: 31px; background: #b0b0b0; border: 1px solid #777; display: flex; align-items: center; justify-content: center; }
.select-dd { flex: 1; border: 1px solid #999; border-left: 0; background: #f6f6f6; display: flex; align-items: center; justify-content: center; }
.quick-end { display: flex; align-items: center; margin-left: 9px; }
.quick-end svg { margin-right: 12px; }
.quick-end svg:first-child { margin-right: 15px; }
.quick-end svg:nth-child(3) { margin-right: 10px; }
.doc-title { margin-left: auto; width: 356px; letter-spacing: -.37px; }
.search { width: 202px; height: 23px; border: 1px solid #bcbcbc; background: #fff; display: flex; align-items: center; padding: 0 4px 0 5px; color: #555; letter-spacing: -.35px; }
.q-badge { width: 16px; height: 16px; border: 1px solid #333; border-radius: 50%; background: #dceaf1; color: #24688c; font: bold 12px/14px "Noto Sans", sans-serif; text-align: center; margin-right: 6px; letter-spacing: 0; }
.search svg { margin-left: auto; margin-right: 7px; }
.window-buttons { display: flex; align-items: center; margin-left: 11px; margin-right: 15px; color: #333; }
.help { width: 19px; height: 19px; margin-left: 17px; border: 1.5px solid #444; border-radius: 50%; font: bold 14px/16px "Noto Sans", sans-serif; text-align: center; }
.min { width: 10px; height: 2px; background: currentColor; margin: 10px 0 0 21px; }
.window-buttons svg:nth-child(4) { margin-left: 24px; }
.window-buttons svg:nth-child(5) { margin-left: 21px; }

/* ribbon */
.ribbon { height: 82px; flex: none; display: flex; background: #f6f6f6; border-bottom: 1px solid #858585; border-right: 1px solid #858585; letter-spacing: -.28px; }
.btn { position: relative; display: flex; flex-direction: column; align-items: center; padding-top: 7px; height: 79px; margin-top: 1px; text-align: center; white-space: nowrap; }
.btn svg { width: 18px; height: 18px; }
.btn .dd { position: absolute; bottom: 10px; left: calc(50% - 3px); }
.off, .rows { color: #aeaeae; }
.sep { width: 1px; height: 78px; margin-top: 1px; background: #c4c4c4; flex: none; }
.w-sketch { width: 55px; }
.w-smart { width: 61px; padding-right: 6px; }
.w-smart .dd { left: 24px; }
.w-49 { width: 49px; }
.w-48 { width: 48px; }
.w-86 { width: 86px; }
.w-44 { width: 44px; }
.w-43 { width: 43px; }
.w-45 { width: 45px; }
.w-58 { width: 58px; }
.pressed { width: 60px; background: #b0b0b0; border: 1px solid #777; padding-top: 6px; }
.tools { display: grid; grid-template-columns: repeat(4, 40px) 24px; grid-template-rows: repeat(3, 26px); padding-left: 4px; padding-top: 1px; }
.tools div { display: flex; align-items: center; gap: 6px; }
.tools svg { width: 20px; height: 20px; }
.rows { width: 175px; padding: 0 5px 0 3px; letter-spacing: -.3px; }
.rows div { display: flex; align-items: center; height: 26px; }
.rows svg { width: 18px; height: 18px; margin-right: 7px; }
.rows .dd { margin-left: auto; }
.collapse { margin: 63px 7px 0 auto; }

/* command tabs */
.tabrow { height: 22px; flex: none; display: flex; justify-content: space-between; border-right: 1px solid #000; }
.tabs { display: flex; }
.tabs span { height: 22px; background: #d4d4d4; border-right: 1px solid #858585; border-bottom: 1px solid #858585; line-height: 21px; text-align: center; white-space: nowrap; padding-left: 1px; }
.tabs .active { background: #f6f6f6; font-weight: bold; border-bottom-color: #f6f6f6; margin-top: -1px; height: 23px; line-height: 23px; }
.t55 { width: 55px; } .t60 { width: 60px; } .t56 { width: 56px; } .t99 { width: 99px; } .t95 { width: 95px; } .t57 { width: 57px; } .t107 { width: 107px; } .t131 { width: 131px; } .t74 { width: 75px; } .t121 { width: 121px; } .t146 { width: 146px; } .t122 { width: 122px; }
.doc-buttons { display: flex; align-items: center; color: #999; padding: 8px 13px 0 0; }
.doc-buttons svg:nth-child(2) { margin-left: 13px; }
.doc-buttons .min { margin-left: 15px; }
.doc-buttons svg:nth-child(4) { margin-left: 14px; }
.doc-buttons svg:nth-child(5) { margin-left: 11px; }

/* feature panel */
.body { flex: 1; display: flex; min-height: 0; }
.panel { position: relative; width: 230px; background: #f6f6f6; border-right: 1px solid #858585; border-left: 1px solid #c4c4c4; border-top: 1px solid #9c9c9c; display: flex; flex-direction: column; }
.grip { height: 16px; margin: 2px 2px 0 0; border: solid #c4c4c4; border-width: 1px 0; display: flex; align-items: center; justify-content: center; }
.grip i, .handle i { width: 6px; height: 6px; border: 1px solid #999; border-radius: 50%; background: #ddd; }
.ptabs { position: relative; height: 26px; margin: 5px 2px 0 0; border-top: 1px solid #858585; border-bottom: 1px solid #aaa; display: flex; background: #d4d4d4; overflow: hidden; }
.ptabs > span { width: 40px; flex: none; border-right: 1px solid #858585; display: flex; align-items: center; justify-content: center; }
.ptabs > span:first-child { width: 41px; padding-left: 2px; }
.ptabs svg, .tree svg, .taskpane svg { width: 18px; height: 18px; }
.ptabs .on { background: #f6f6f6; }
.pscroll { position: absolute; right: -2px; top: 6px; height: 19px; display: flex; }
.pscroll b { width: 20px; background: #f6f6f6; border: 1px solid #aaa; border-right-width: 0; display: flex; align-items: center; justify-content: center; }
.pscroll b::before { content: ""; border: 3px solid transparent; border-left-width: 0; border-right: 3px solid #111; }
.pscroll .right::before { transform: scaleX(-1); }
.filter { height: 25px; margin: 0 5px 0 4px; border: 1px solid #c4c4c4; padding: 3px 0 0 2px; }
.tree { list-style: none; margin: 1px 2px 0 0; padding: 0; overflow: hidden; font-size: 12px; letter-spacing: -.28px; }
.tree li { display: flex; align-items: center; height: 22px; white-space: nowrap; }
.tree li > i { width: 8px; margin: 0 9px 0 9px; flex: none; height: 8px; }
.tree .exp::before { content: ""; display: block; width: 0; height: 0; border: 4px solid transparent; border-left: 5px solid #555; border-right: 0; margin-top: -1px; }
.tree li > svg { margin-right: 5px; }
.tree .root > svg { margin: 0 0 0 4px; }
.tree .root .cap { width: 20px; }
.tree .root span { margin-left: 4px; letter-spacing: -.56px; }
.rollback { height: 3px; background: #3d8fbd; margin: 0 2px 0 0; flex: none; }
.hscroll { margin: auto 2px 0 0; display: flex; height: 15px; background: #f0f0f0; }
.thumb { width: 126px; background: #cbcbcb; margin-right: auto; }
.pfoot { margin: 3px 0 0; height: 3px; border: solid #c8c8c8; border-width: 1px 0; }
.handle { position: absolute; left: 228px; top: 402px; width: 9px; height: 39px; background: #f6f6f6; border: 1px solid #858585; border-left: 0; display: flex; align-items: center; padding-left: 1px; z-index: 2; }

/* graphics area */
.viewport { position: relative; flex: 1; }
.viewport::after { content: ""; position: absolute; right: 0; top: 0; width: 1px; height: 834px; background: #000; }
.model { width: 1689px; height: 867px; }
.triad text { font: 9px "Noto Sans", sans-serif; }
.hud { position: absolute; left: 667px; top: 5px; display: flex; align-items: center; }
.hud svg { width: 20px; height: 20px; margin-right: 6px; }
.hud svg:has(+ .dd) { margin-right: 7px; }
.hud .dd { margin-right: 7px; }
.hud .scene { margin-left: -1px; }
.taskpane { position: absolute; right: 1px; top: 54px; width: 25px; border: 1px solid #858585; border-right: 0; z-index: 2; }
.taskpane span { height: 24px; display: flex; align-items: center; justify-content: center; background: #d6d6d6; border-bottom: 1px solid #858585; }
.taskpane span:first-child { height: 23px; }
.taskpane span:last-child { border-bottom: 0; height: 23px; }
.taskpane .on { background: #fff; }
.taskpane b { width: 20px; height: 20px; border-radius: 3px; background: #f4d51f; color: #346a36; font: 900 15px/20px "Open Sans", sans-serif; text-align: center; }
.orientation { position: absolute; left: 11px; bottom: 3px; font: bold 11.5px/13px "DejaVu Sans", sans-serif; letter-spacing: -.2px; }

/* bottom bars */
.motion { height: 16px; flex: none; display: flex; border: solid #858585; border-width: 1px 1px 1px 0; background: #f6f6f6; line-height: 13px; }
.nav { width: 91px; padding-left: 27px; }
.nav svg { background: #b8b8b8; }
.motion span { text-align: center; border-right: 1px solid #858585; background: #d4d4d4; }
.motion .m-model { width: 58px; background: #f6f6f6; font-weight: bold; padding-left: 3px; }
.m-views { width: 68px; }
.m-study { width: 108px; padding-right: 8px; }
.status { height: 18px; flex: none; display: flex; align-items: center; background: #f6f6f6; padding-left: 1px; padding-bottom: 1px; font-size: 12px; letter-spacing: -.34px; }
.editing { margin-left: auto; width: 176px; }
.custom { width: 57px; }
.up { border: 3px solid transparent; border-top: 0; border-bottom: 3px solid #333; margin-right: 26px; }
.status svg { margin-right: 3px; }
```
